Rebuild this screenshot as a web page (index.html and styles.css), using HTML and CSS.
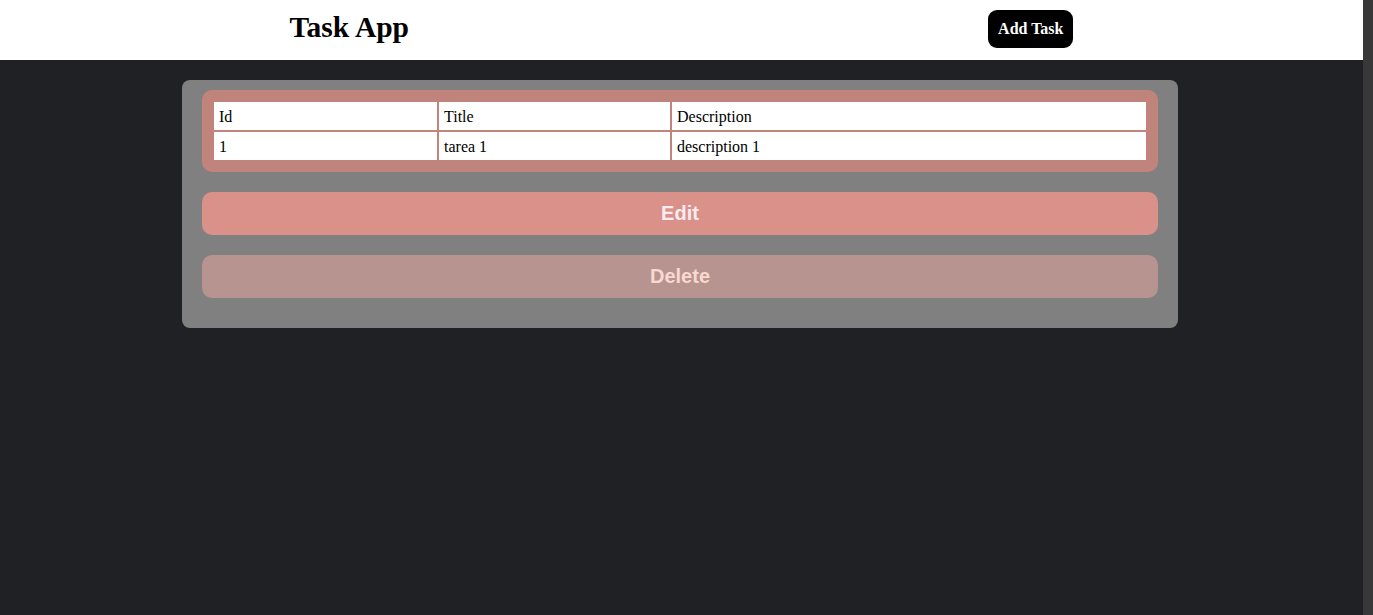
FILE: index.html
```html
<!DOCTYPE html>
<html lang="en">
<head>
<meta charset="utf-8">
<title>Task App</title>
<link rel="stylesheet" href="styles.css">
</head>
<body>
<div class="page">
  <header class="topbar">
    <h1 class="brand">Task App</h1>
    <button class="add-btn">Add Task</button>
  </header>
  <main class="panel">
    <div class="table-wrap">
      <table class="tasks">
        <colgroup>
          <col class="c-id">
          <col class="c-title">
          <col class="c-desc">
        </colgroup>
        <tr><td>Id</td><td>Title</td><td>Description</td></tr>
        <tr><td>1</td><td>tarea 1</td><td>description 1</td></tr>
      </table>
    </div>
    <button class="action edit">Edit</button>
    <button class="action delete">Delete</button>
  </main>
</div>
<div class="scroll-track"></div>
</body>
</html>
```
FILE: styles.css
```css
html {
  background: #202125;
}
body {
  margin: 0;
  background: #202125;
  font-family: "Liberation Serif", "Times New Roman", serif;
  display: flex;
  min-height: 615px;
}
.page {
  flex: 1;
  min-width: 0;
}
.scroll-track {
  width: 10px;
  flex: none;
  background: #383838;
}
.topbar {
  height: 60px;
  background: #ffffff;
  display: flex;
  justify-content: space-around;
  align-items: center;
}
.brand {
  margin: 0 0 5px;
  font-size: 29.5px;
  font-weight: bold;
  color: #000;
}
.add-btn {
  background: #000;
  color: #fff;
  border: none;
  border-radius: 9px;
  font-family: "Liberation Serif", "Times New Roman", serif;
  font-weight: bold;
  font-size: 16px;
  padding: 10px 10px;
  line-height: 18px;
  margin-bottom: 2px;
}
.panel {
  width: 996px;
  box-sizing: border-box;
  margin: 20px 0 0 182px;
  background: #808080;
  border-radius: 8px;
  padding: 10px 20px 30px;
  display: flex;
  flex-direction: column;
  gap: 20px;
}
.table-wrap {
  background: #c0847d;
  border-radius: 10px;
  padding: 10px;
}
.tasks {
  width: 100%;
  table-layout: fixed;
  border-spacing: 2px;
  font-size: 16px;
  color: #000;
}
.c-id { width: 223px; }
.c-title { width: 231px; }
.tasks td {
  background: #fff;
  padding: 6px 5px 4px 5px;
  line-height: 18px;
  height: 18px;
}
.action {
  height: 43px;
  border: none;
  border-radius: 10px;
  font-family: "Liberation Sans", Arial, sans-serif;
  font-weight: bold;
  font-size: 20px;
  padding: 0;
}
.edit {
  background: #d99189;
  color: #f8ecee;
}
.delete {
  background: #b7948f;
  color: #fad8d2;
}
```
